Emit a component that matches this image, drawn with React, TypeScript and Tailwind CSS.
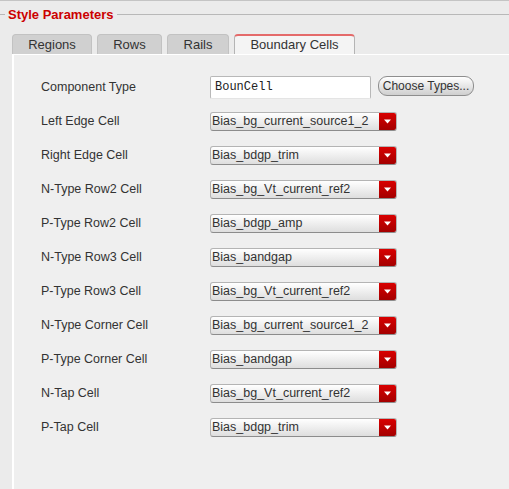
import React from "react";

const tabs = [
  { name: "Regions", w: "w-[80px]" },
  { name: "Rows", w: "w-[65px]" },
  { name: "Rails", w: "w-[62px]" },
];

const cells = [
  { label: "Left Edge Cell", value: "Bias_bg_current_source1_2" },
  { label: "Right Edge Cell", value: "Bias_bdgp_trim" },
  { label: "N-Type Row2 Cell", value: "Bias_bg_Vt_current_ref2" },
  { label: "P-Type Row2 Cell", value: "Bias_bdgp_amp" },
  { label: "N-Type Row3 Cell", value: "Bias_bandgap" },
  { label: "P-Type Row3 Cell", value: "Bias_bg_Vt_current_ref2" },
  { label: "N-Type Corner Cell", value: "Bias_bg_current_source1_2" },
  { label: "P-Type Corner Cell", value: "Bias_bandgap" },
  { label: "N-Tap Cell", value: "Bias_bg_Vt_current_ref2" },
  { label: "P-Tap Cell", value: "Bias_bdgp_trim" },
];

const Dropdown = ({ value }: { value: string }) => (
  <div className="flex h-[19px] w-[187px] rounded-[3px] border border-[#b4b4b4] border-b-[#8c8c8c] bg-gradient-to-b from-[#ffffff] to-[#dedede] overflow-hidden">
    <div className="flex-1 pl-[1px] text-[12.5px] leading-[17px] text-[#333] whitespace-nowrap overflow-hidden">
      {value}
    </div>
    <div className="w-[17px] flex items-center justify-center bg-gradient-to-b from-[#d80000] to-[#a40000]">
      <svg width="7" height="5" viewBox="0 0 7 5">
        <polygon points="0,0.5 7,0.5 3.5,4.5" fill="#ffffff" />
      </svg>
    </div>
  </div>
);

const App = () => {
  return (
    <div className="w-[509px] h-[489px] overflow-hidden bg-[#ebebeb] border-t border-[#c4c4c4] font-['Liberation_Sans',Arial,sans-serif] flex flex-col">
      {/* group header */}
      <div className="mt-[5px] h-[16px] flex items-center">
        <div className="w-[5px] h-px bg-[#b8b8b8]" />
        <span className="px-[3px] text-[13px] font-bold text-[#cc0000] leading-none">
          Style Parameters
        </span>
        <div className="flex-1 h-px bg-[#b8b8b8]" />
      </div>

      {/* tabs */}
      <div className="mt-[12px] ml-[12px] flex gap-[5px] h-[20px]">
        {tabs.map((t) => (
          <div
            key={t.name}
            className={`${t.w} h-[20px] rounded-t-[4px] border border-b-0 border-[#c2c2c2] bg-[#d0d0d0] text-[13px] text-[#333] flex items-center justify-center`}
          >
            {t.name}
          </div>
        ))}
        <div className="w-[121px] h-[20px] rounded-t-[4px] border border-b-0 border-[#b4b4b4] border-t-2 border-t-[#e46a6a] bg-[#f4f4f4] text-[13px] text-[#333] flex items-center justify-center">
          Boundary Cells
        </div>
      </div>

      {/* panel */}
      <div className="ml-[12px] flex-1 bg-[#efefef] border-l-2 border-t border-white pt-[15px] pl-[27px]">
        <div className="h-[34px] flex items-center">
          <div className="w-[169px] text-[12.5px] text-[#333]">Component Type</div>
          <div className="w-[161px] h-[23px] rounded-[2px] border border-[#b8b8b8] border-b-[#e4e4e4] bg-white pl-[4px] text-[12px] leading-[21px] text-[#222] font-['Liberation_Mono',monospace]">
            BounCell
          </div>
          <button className="ml-[7px] w-[96px] h-[20px] -mt-[3px] rounded-[9px] border border-[#8e8e8e] bg-gradient-to-b from-[#ffffff] to-[#cfcfcf] text-[12px] text-[#333] leading-none">
            Choose Types...
          </button>
        </div>
        {cells.map((c) => (
          <div key={c.label} className="h-[34px] flex items-center">
            <div className="w-[169px] text-[12.5px] text-[#333]">{c.label}</div>
            <Dropdown value={c.value} />
          </div>
        ))}
      </div>
    </div>
  );
};

export default App;
